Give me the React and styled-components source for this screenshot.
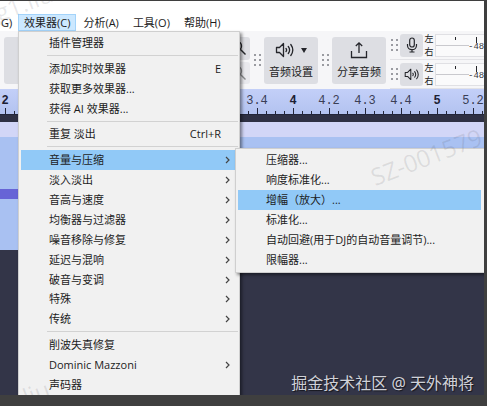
import React from 'react';

import styled, { createGlobalStyle, css } from 'styled-components';

const GlobalStyle = createGlobalStyle`
  * {
    box-sizing: border-box;
  }

  body {
    margin: 0;
    font-family: 'Open Sans', 'Noto Sans CJK SC', sans-serif;
    font-size: 11px;
    line-height: 16px;
    color: #1c1c1c;
  }

  button {
    margin: 0;
    padding: 0;
    border: 0;
    background: none;
    font: inherit;
    color: inherit;
    text-align: left;
    white-space: nowrap;
  }
`;

const Frame = styled.div`
  height: 100vh;
  padding: 1px 3px 11px 0;
  background: #3f3f3f;
`;

const Window = styled.div`
  position: relative;
  height: 100%;
  display: flex;
  flex-direction: column;
  overflow: hidden;
  background: #fff;
`;

const MenuBar = styled.nav`
  flex: none;
  height: 30px;
  padding-top: 13px;
  display: flex;
`;

const MenuBarItem = styled.button`
  height: 17px;
  padding: 0 ${({ $open }) => ($open ? 5 : 6)}px;
  border: 1px solid ${({ $open }) => ($open ? '#a3d3fa' : 'transparent')};
  background: ${({ $open }) => ($open ? '#cce8ff' : 'transparent')};
  line-height: 15px;

  &:first-child {
    width: 18px;
    padding: 0;
  }
`;

const Workspace = styled.div`
  position: relative;
  flex: 1;
  min-height: 0;
  display: flex;
  flex-direction: column;
`;

const Toolbar = styled.div`
  flex: none;
  height: 58px;
  display: flex;
  justify-content: flex-end;
  background: #f6f6f8;
  overflow: hidden;
`;

const HiddenTools = styled.div`
  flex: 1;
  display: flex;
  justify-content: space-between;
  padding: 6px 0 5px 4px;
`;

const ToolBlock = styled.div`
  width: 40px;
  border-radius: 3px;
  background: #dddee3;
`;

const ZoomTools = styled.div`
  width: 24px;
  display: flex;
  flex-direction: column;
  gap: 2px;
`;

const SmallButton = styled.button`
  width: ${({ $width }) => $width || 23}px;
  height: 23px;
  display: flex;
  align-items: center;
  justify-content: center;
  border-radius: 3px;
  background: #dddee3;
  opacity: ${({ disabled }) => (disabled ? 0.5 : 1)};
`;

const Grip = styled.div`
  width: 7px;
  height: 12px;
  margin: ${({ $compact }) => ($compact ? '0 2px 0 1px' : '0 3px 0 4px')};
  align-self: center;
  background: radial-gradient(circle at 1px 1px, #9a9ba1 1px, transparent 1px) 0 0 / 5px 5px;
`;

const BigButton = styled.button`
  width: 54px;
  height: 47px;
  margin-top: 6px;
  display: flex;
  flex-direction: column;
  align-items: center;
  justify-content: space-between;
  padding: 3px 0 4px;
  border-radius: 3px;
  background: #dddee3;
`;

const IconRow = styled.span`
  height: 20px;
  display: flex;
  align-items: center;
  gap: 6px;
`;

const Meters = styled.div`
  width: 94px;
  margin-left: 4px;
`;

const MeterRow = styled.div`
  height: 29px;
  display: flex;
  align-items: center;
  border-bottom: 1px solid #e2e2e6;
`;

const Channels = styled.div`
  width: 12px;
  display: grid;
  gap: 1px;
  font-size: 9px;
  line-height: 12px;
  text-align: center;
`;

const MeterScale = styled.div`
  flex: 1;
  height: 23px;
  border: 1px solid #e0e0e4;
  border-right: 0;
  background: #fafafb;
`;

const Ruler = styled.div`
  flex: none;
  height: 26px;
  display: flex;
  overflow: hidden;
  background: linear-gradient(#c3cff8, #b3c3f0);
  border-bottom: 1px solid #23263a;
`;

const RulerMark = styled.div`
  flex: none;
  width: 36px;
  font: ${({ $major }) => ($major ? 'bold' : 'normal')} 12px/24px 'Liberation Mono', monospace;
  text-align: center;
  color: ${({ $major }) => ($major ? '#1d2033' : '#3a3e55')};
  background:
    linear-gradient(#23263a, #23263a) 18px 100% / 1px 6px no-repeat,
    repeating-linear-gradient(90deg, #23263a 0 1px, transparent 1px 9px) 0 100% / 100% 3px no-repeat;

  &:first-child {
    margin-left: -13px;
  }
`;

const RulerEdge = styled.div`
  flex: none;
  height: 7px;
  background: #2f3144;
`;

const TrackHeader = styled.div`
  flex: none;
  height: 15px;
  background: #d2d6f7;
`;

const Clip = styled.div`
  flex: none;
  height: 113px;
  display: flex;
  align-items: center;
  background: #a9c1f2;
`;

const Wave = styled.div`
  width: 100%;
  height: 10px;
  background: #6764d6;
`;

const EmptyTracks = styled.div`
  flex: 1;
  background: #333548;
`;

const popup = css`
  position: absolute;
  display: flex;
  flex-direction: column;
  border: 1px solid #cfcfcf;
  background: #f1f1f1;
  box-shadow: 2px 2px 3px rgba(0, 0, 0, 0.45);
`;

const Menu = styled.div`
  ${popup}
  top: 0;
  bottom: 0;
  left: 18px;
  width: 222px;
  padding: 1px 1px 0 2px;
  border-bottom: 0;
`;

const SubMenu = styled.div`
  ${popup}
  top: 117px;
  left: 235px;
  right: 0;
  padding: 1px 0 2px 2px;
  border-right: 0;
`;

const MenuItem = styled.button`
  flex: 1 1 20px;
  min-height: 19px;
  margin-right: 3px;
  padding: 0 5px 0 28px;
  display: flex;
  align-items: center;
  background: ${({ $active }) => ($active ? '#91c9f7' : 'transparent')};
`;

const Label = styled.span`
  flex: 1;
`;

const Shortcut = styled.span`
  margin-right: 9px;
`;

const Separator = styled.hr`
  flex: none;
  width: auto;
  height: 1px;
  margin: 2px 0 3px 26px;
  border: 0;
  background: #d2d2d2;
`;

const Stamp = styled.span`
  position: absolute;
  left: ${({ $x }) => $x}px;
  top: ${({ $y }) => $y}px;
  font-size: 24px;
  line-height: 24px;
  color: rgba(70, 70, 80, 0.12);
  transform: rotate(-21deg);
  transform-origin: 0 100%;
  white-space: nowrap;
  pointer-events: none;
`;

const Credit = styled.span`
  position: absolute;
  right: 10px;
  bottom: 0;
  font: 16px/24px 'Noto Sans', 'Noto Sans CJK SC', sans-serif;
  color: #d0d1d8;
  text-shadow: 1px 1px 1px rgba(0, 0, 0, 0.6);
  white-space: nowrap;
`;

const Chevron = () => (
  <svg width="6" height="8" viewBox="0 0 6 8" fill="none" stroke="#444" strokeWidth="1.2">
    <path d="M2 1l3 3-3 3" />
  </svg>
);

const Speaker = ({ size = 20 }) => (
  <svg width={size} height={size * 0.8} viewBox="0 0 20 16" fill="none" stroke="#25262b" strokeWidth="1.3">
    <path d="M1.5 5.5h3l4-4v13l-4-4h-3z" strokeLinejoin="round" />
    <path d="M11 6.5q1.2 1.5 0 3M13.3 4.5q2.6 3.5 0 7M15.8 2.5q4 5.5 0 11" strokeLinecap="round" />
  </svg>
);

const Mic = () => (
  <svg width="12" height="16" viewBox="0 0 12 16" fill="none" stroke="#25262b" strokeWidth="1.2">
    <rect x="3.7" y="1" width="4.6" height="9" rx="2.3" />
    <path d="M1.5 7v1.5a4.5 4.2 0 0 0 9 0V7M6 12.7V15M3.5 15h5" />
  </svg>
);

const Share = () => (
  <svg width="18" height="18" viewBox="0 0 18 18" fill="none" stroke="#25262b" strokeWidth="1.3">
    <path d="M1.5 10v6.5h15V10M9 12V2M5.8 5L9 1.8 12.2 5" />
  </svg>
);

const Magnifier = () => (
  <svg width="20" height="16" viewBox="0 0 20 16" fill="none" stroke="#25262b" strokeWidth="1.4">
    <circle cx="9" cy="6" r="4.5" />
    <path d="M12.5 9.5l5 5" />
  </svg>
);

const Scale = () => (
  <svg width="48" height="21" viewBox="0 0 48 21">
    <path d="M0 10.5h33" stroke="#c9c9ce" />
    <path d="M19.5 2v3M40.5 2v6" stroke="#25262b" />
    <text x="32" y="14" fontFamily="Liberation Mono, monospace" fontSize="9" fill="#3a3b42">
      -48
    </text>
  </svg>
);

const menuItems = [
  { label: '插件管理器' },
  null,
  { label: '添加实时效果器', shortcut: 'E' },
  { label: '获取更多效果器...' },
  { label: '获得 AI 效果器...' },
  null,
  { label: '重复 淡出', shortcut: 'Ctrl+R' },
  null,
  { label: '音量与压缩', sub: true, active: true },
  { label: '淡入淡出', sub: true },
  { label: '音高与速度', sub: true },
  { label: '均衡器与过滤器', sub: true },
  { label: '噪音移除与修复', sub: true },
  { label: '延迟与混响', sub: true },
  { label: '破音与变调', sub: true },
  { label: '特殊', sub: true },
  { label: '传统', sub: true },
  null,
  { label: '削波失真修复' },
  { label: 'Dominic Mazzoni', sub: true },
  { label: '声码器' },
];

const subItems = [
  '压缩器...',
  '响度标准化...',
  '增幅（放大）...',
  '标准化...',
  '自动回避(用于DJ的自动音量调节)...',
  '限幅器...',
];

const rulerMarks = ['2', '', '', '', '', '', '', '3.4', '4', '4.2', '4.3', '4.4', '5', '5.2'];

const Meter = ({ label, children }) => (
  <MeterRow>
    <Grip $compact />
    <SmallButton aria-label={label}>{children}</SmallButton>
    <Channels>
      <div>左</div>
      <div>右</div>
    </Channels>
    <MeterScale>
      <Scale />
    </MeterScale>
  </MeterRow>
);

const App = () => (
  <Frame>
    <GlobalStyle />
    <Window>
      <MenuBar>
        <MenuBarItem>G)</MenuBarItem>
        <MenuBarItem $open>效果器(C)</MenuBarItem>
        <MenuBarItem>分析(A)</MenuBarItem>
        <MenuBarItem>工具(O)</MenuBarItem>
        <MenuBarItem>帮助(H)</MenuBarItem>
      </MenuBar>
      <Workspace>
        <Toolbar>
          <HiddenTools>
            <ToolBlock />
            <ZoomTools>
              <SmallButton $width={24} aria-label="放大">
                <Magnifier />
              </SmallButton>
              <SmallButton $width={24} aria-label="缩小" disabled>
                <Magnifier />
              </SmallButton>
            </ZoomTools>
          </HiddenTools>
          <Grip />
          <BigButton>
            <IconRow>
              <Speaker />
              <svg width="6" height="5" viewBox="0 0 6 5">
                <path d="M0 0h6L3 5z" fill="#25262b" />
              </svg>
            </IconRow>
            音频设置
          </BigButton>
          <Grip />
          <BigButton>
            <IconRow>
              <Share />
            </IconRow>
            分享音频
          </BigButton>
          <Meters>
            <Meter label="录音电平">
              <Mic />
            </Meter>
            <Meter label="播放电平">
              <Speaker size={16} />
            </Meter>
          </Meters>
        </Toolbar>
        <Ruler>
          {rulerMarks.map((mark, i) => (
            <RulerMark key={i} $major={mark.length === 1}>
              {mark}
            </RulerMark>
          ))}
        </Ruler>
        <RulerEdge />
        <TrackHeader />
        <Clip>
          <Wave />
        </Clip>
        <EmptyTracks />
        <Menu>
          {menuItems.map((item, i) =>
            item ? (
              <MenuItem key={i} $active={item.active}>
                <Label>{item.label}</Label>
                {item.shortcut && <Shortcut>{item.shortcut}</Shortcut>}
                {item.sub && <Chevron />}
              </MenuItem>
            ) : (
              <Separator key={i} />
            )
          )}
        </Menu>
        <SubMenu>
          {subItems.map((label, i) => (
            <MenuItem key={label} $active={i === 2}>
              {label}
            </MenuItem>
          ))}
        </SubMenu>
      </Workspace>
      <Stamp $x={376} $y={164}>SZ-001579</Stamp>
      <Stamp $x={0} $y={0}>g1.liu</Stamp>
      <Stamp $x={28} $y={384}>liu</Stamp>
      <Credit>掘金技术社区 @ 天外神将</Credit>
    </Window>
  </Frame>
);

export default App;
